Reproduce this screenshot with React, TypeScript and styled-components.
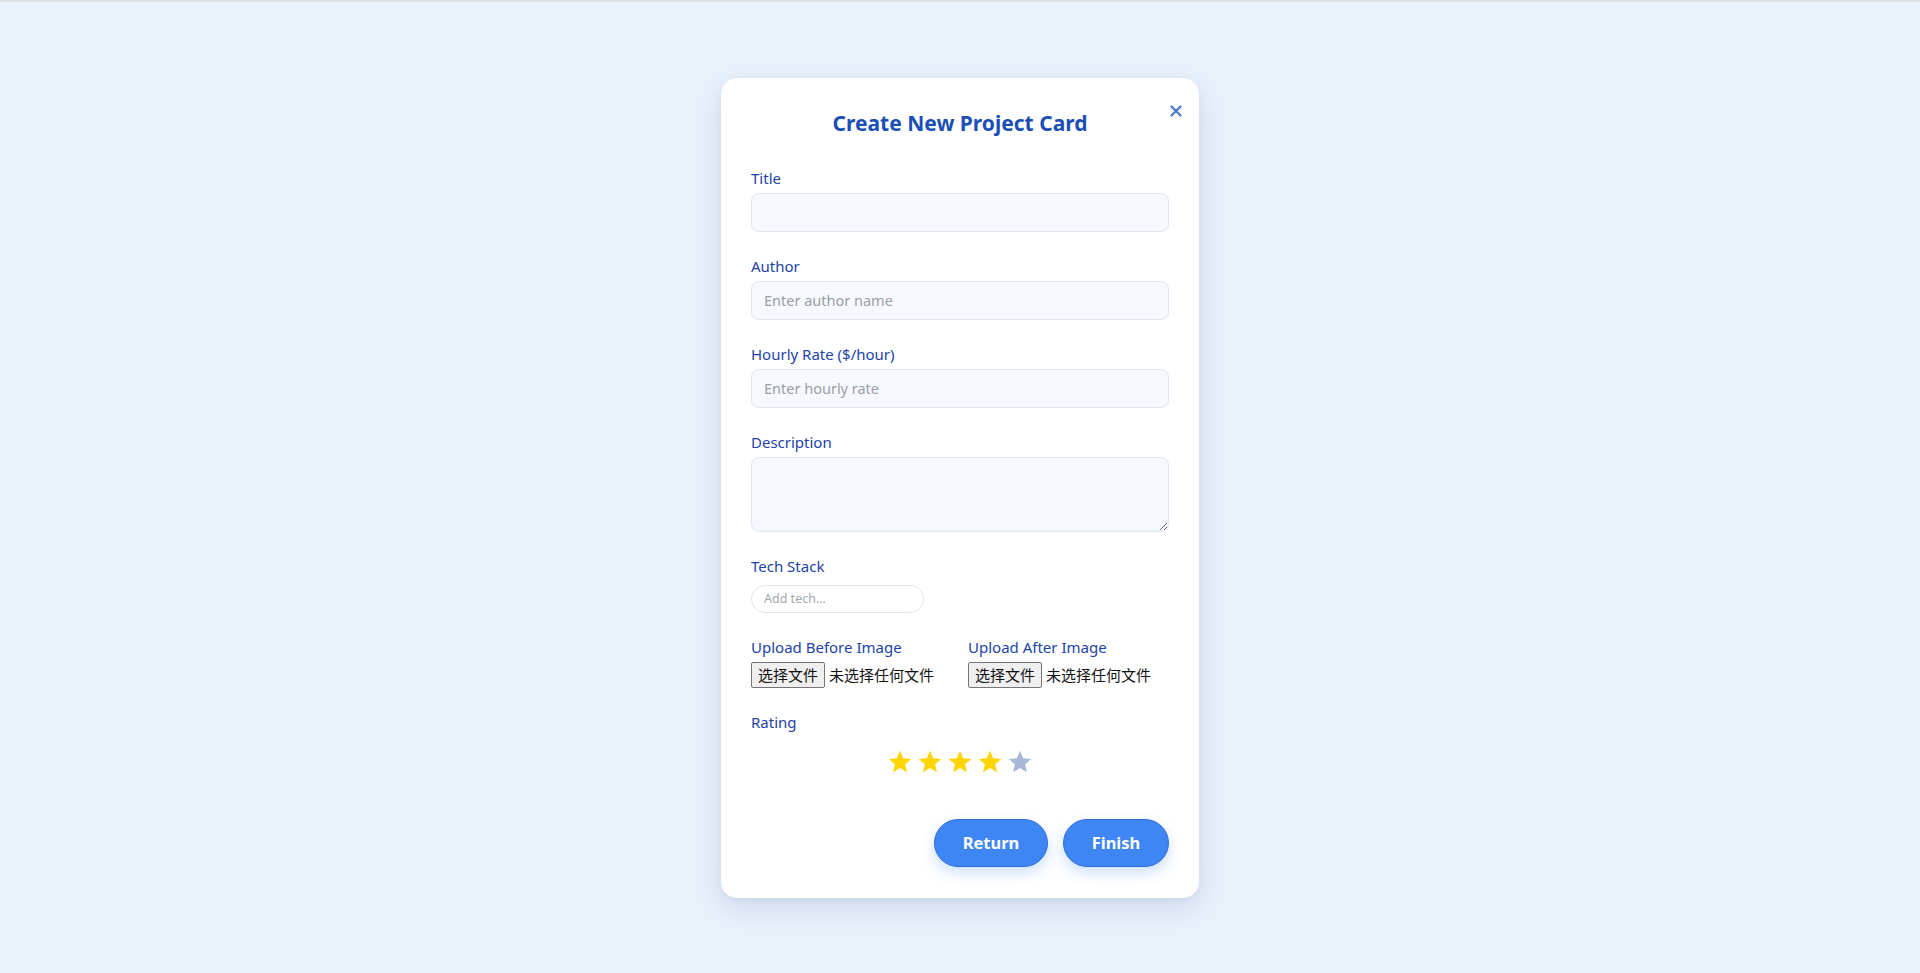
import React, { useState } from 'react';
import styled, { createGlobalStyle } from 'styled-components';

const GlobalStyle = createGlobalStyle`
    html, body {
        margin: 0;
        padding: 0;
    }
    body {
        background-color: #e9f1fb;
        font-family: "Noto Sans", "Open Sans", sans-serif;
        border-top: 2px solid #dcdedf;
    }
`;

export default function App() {
    const [rating, setRating] = useState(4);

    return (
        <Page>
            <GlobalStyle />
            <Card>
                <CloseButton aria-label="close">
                    <svg width="12" height="12" viewBox="0 0 12 12">
                        <path d="M1.5 1.5 L10.5 10.5 M10.5 1.5 L1.5 10.5" stroke="#4b7bc9" strokeWidth="2.4" strokeLinecap="round" />
                    </svg>
                </CloseButton>
                <Heading>Create New Project Card</Heading>

                <Form>
                    <Field>
                        <Label>Title</Label>
                        <Input type="text" />
                    </Field>
                    <Field>
                        <Label>Author</Label>
                        <Input type="text" placeholder="Enter author name" />
                    </Field>
                    <Field>
                        <Label>Hourly Rate ($/hour)</Label>
                        <Input type="text" placeholder="Enter hourly rate" />
                    </Field>
                    <Field>
                        <Label>Description</Label>
                        <TextArea />
                    </Field>
                    <Field>
                        <Label>Tech Stack</Label>
                        <TechInput type="text" placeholder="Add tech..." />
                    </Field>
                    <UploadGrid>
                        <Field>
                            <Label>Upload Before Image</Label>
                            <FilePicker>
                                <HiddenFile type="file" />
                                <FileButton>选择文件</FileButton>
                                <FileName>未选择任何文件</FileName>
                            </FilePicker>
                        </Field>
                        <Field>
                            <Label>Upload After Image</Label>
                            <FilePicker>
                                <HiddenFile type="file" />
                                <FileButton>选择文件</FileButton>
                                <FileName>未选择任何文件</FileName>
                            </FilePicker>
                        </Field>
                    </UploadGrid>
                    <Field>
                        <Label>Rating</Label>
                        <Stars>
                            {[1, 2, 3, 4, 5].map((n) => (
                                <Star key={n} $on={n <= rating} onClick={() => setRating(n)}>
                                    <svg width="26" height="26" viewBox="0 0 24 24">
                                        <path d="M12 1.6 L14.9 8.6 L22.4 9.2 L16.7 14.1 L18.4 21.5 L12 17.6 L5.6 21.5 L7.3 14.1 L1.6 9.2 L9.1 8.6 Z" fill="currentColor" />
                                    </svg>
                                </Star>
                            ))}
                        </Stars>
                    </Field>
                </Form>

                <Actions>
                    <PillButton $w={114}>Return</PillButton>
                    <PillButton $w={106}>Finish</PillButton>
                </Actions>
            </Card>
        </Page>
    );
}

const Page = styled.div`
    min-height: 971px;
    display: flex;
    align-items: center;
    justify-content: center;
`;

const Card = styled.div`
    position: relative;
    width: 478px;
    box-sizing: border-box;
    padding: 30px 30px 31px;
    background-color: #fff;
    border-radius: 16px;
    box-shadow: 0 10px 30px rgba(37, 76, 150, 0.14), 0 2px 6px rgba(37, 76, 150, 0.06);
`;

const CloseButton = styled.button`
    position: absolute;
    top: 22px;
    right: 12px;
    width: 22px;
    height: 22px;
    padding: 0;
    border: none;
    background: transparent;
    display: flex;
    align-items: center;
    justify-content: center;
    cursor: pointer;
`;

const Heading = styled.h2`
    margin: 0 0 30px;
    text-align: center;
    font-size: 21px;
    line-height: 30px;
    font-weight: 700;
    color: #1b4fb6;
`;

const Form = styled.div`
    display: flex;
    flex-direction: column;
    gap: 24px;
`;

const Field = styled.div`
    display: flex;
    flex-direction: column;
    gap: 5px;
`;

const Label = styled.label`
    font-size: 15px;
    line-height: 20px;
    font-weight: 400;
    color: #1d43a8;
`;

const Input = styled.input`
    height: 39px;
    box-sizing: border-box;
    padding: 0 12px;
    border: 1px solid #dde6f3;
    border-radius: 8px;
    background-color: #f5f8fd;
    font-family: inherit;
    font-size: 14.5px;
    color: #1f2937;
    outline: none;

    &::placeholder {
        color: #9aa0a8;
    }
`;

const TextArea = styled.textarea`
    height: 75px;
    box-sizing: border-box;
    padding: 10px 12px;
    border: 1px solid #dde6f3;
    border-radius: 8px;
    background-color: #f5f8fd;
    font-family: inherit;
    font-size: 14.5px;
    resize: vertical;
    outline: none;
`;

const TechInput = styled.input`
    margin-top: 4px;
    width: 173px;
    height: 28px;
    box-sizing: border-box;
    padding: 0 12px;
    border: 1px solid #e0e7f1;
    border-radius: 14px;
    background-color: #fff;
    font-family: inherit;
    font-size: 12.5px;
    outline: none;

    &::placeholder {
        color: #a3a8b0;
    }
`;

const UploadGrid = styled.div`
    display: grid;
    grid-template-columns: 1fr 1fr;
    gap: 16px;
`;

const FilePicker = styled.label`
    position: relative;
    display: flex;
    align-items: center;
    gap: 4px;
    height: 26px;
    font-family: "Noto Sans CJK SC", sans-serif;
    font-size: 15px;
    color: #111;
    cursor: pointer;
`;

const HiddenFile = styled.input`
    display: none;
`;

const FileButton = styled.span`
    height: 26px;
    box-sizing: border-box;
    padding: 0 6px;
    display: flex;
    align-items: center;
    border: 1px solid #767676;
    border-radius: 2px;
    background-color: #efefef;
`;

const FileName = styled.span`
    white-space: nowrap;
`;

const Stars = styled.div`
    display: flex;
    justify-content: center;
    gap: 4px;
    padding: 12px 0 12px;
`;

const Star = styled.span<{ $on: boolean }>`
    display: flex;
    color: ${(p) => (p.$on ? '#ffd400' : '#a9b7d8')};
    cursor: pointer;
`;

const Actions = styled.div`
    display: flex;
    justify-content: flex-end;
    gap: 15px;
    margin-top: 32px;
`;

const PillButton = styled.button<{ $w: number }>`
    width: ${(p) => p.$w}px;
    height: 48px;
    border: 1px solid #2f6fe0;
    border-radius: 24px;
    background-color: #3f86f5;
    color: #fff;
    font-family: inherit;
    font-size: 16.5px;
    font-weight: 700;
    box-shadow: 0 6px 14px rgba(59, 130, 246, 0.25);
    cursor: pointer;
`;
